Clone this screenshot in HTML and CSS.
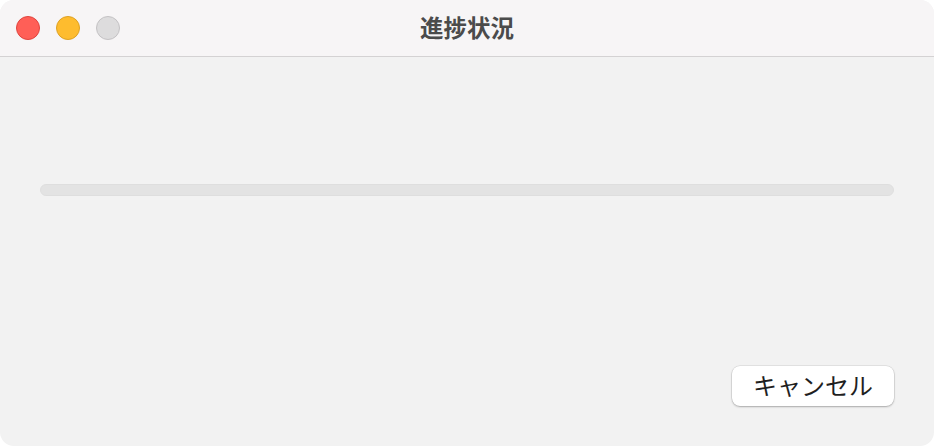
FILE: index.html
```html
<!DOCTYPE html>
<html lang="ja">
<head>
    <meta charset="UTF-8">
    <title>進捗状況</title>
    <link rel="stylesheet" href="styles.css">
</head>
<body>
    <div class="window">
        <div class="titlebar">
            <div class="lights">
                <span class="light close"></span>
                <span class="light minimize"></span>
                <span class="light zoom"></span>
            </div>
            <div class="title">進捗状況</div>
        </div>

        <div class="content">
            <div class="progress"><div class="progress-fill"></div></div>

            <div class="actions">
                <button class="button">キャンセル</button>
            </div>
        </div>
    </div>
</body>
</html>
```

FILE: styles.css
```css
html, body {
    margin: 0;
    padding: 0;
    background-color: #ffffff;
}
body {
    font-family: "Noto Sans CJK JP", "Noto Sans", sans-serif;
    width: 934px;
    height: 446px;
}
.window {
    width: 934px;
    height: 446px;
    box-sizing: border-box;
    background-color: #f2f2f2;
    border-radius: 14px;
    overflow: hidden;
    display: flex;
    flex-direction: column;
}
.titlebar {
    position: relative;
    height: 56px;
    flex-shrink: 0;
    background-color: #f7f5f6;
    border-bottom: 1px solid #d4d2d3;
    display: flex;
    align-items: center;
}
.lights {
    display: flex;
    gap: 16px;
    padding-left: 16px;
}
.light {
    width: 22px;
    height: 22px;
    border-radius: 50%;
    border: 1px solid transparent;
}
.close {
    background-color: #ff5f57;
    border-color: #e0443e;
}
.minimize {
    background-color: #febc2e;
    border-color: #dea123;
}
.zoom {
    background-color: #dddcdd;
    border-color: #c4c2c4;
}
.title {
    position: absolute;
    left: 0;
    right: 0;
    top: 0;
    bottom: 2px;
    display: flex;
    align-items: center;
    justify-content: center;
    font-size: 23.5px;
    font-weight: bold;
    color: #4b4b4b;
    pointer-events: none;
}
.content {
    flex: 1;
    padding: 127px 40px 0 40px;
    display: flex;
    flex-direction: column;
}
.progress {
    height: 12px;
    box-sizing: border-box;
    background-color: #e3e3e3;
    border: 1px solid #dedede;
    border-radius: 6px;
}
.progress-fill {
    width: 0;
    height: 100%;
}
.actions {
    display: flex;
    justify-content: flex-end;
    margin-top: 170px;
}
.button {
    width: 162px;
    height: 40px;
    background-color: #ffffff;
    color: #1f1f1f;
    border: none;
    border-radius: 8px;
    box-shadow: 0 0 0 0.5px rgba(0, 0, 0, 0.12), 0 1px 2px rgba(0, 0, 0, 0.25);
    font-family: "Noto Sans CJK JP", sans-serif;
    font-size: 24px;
    font-weight: 400;
    padding: 0 0 4px 0;
}
```
